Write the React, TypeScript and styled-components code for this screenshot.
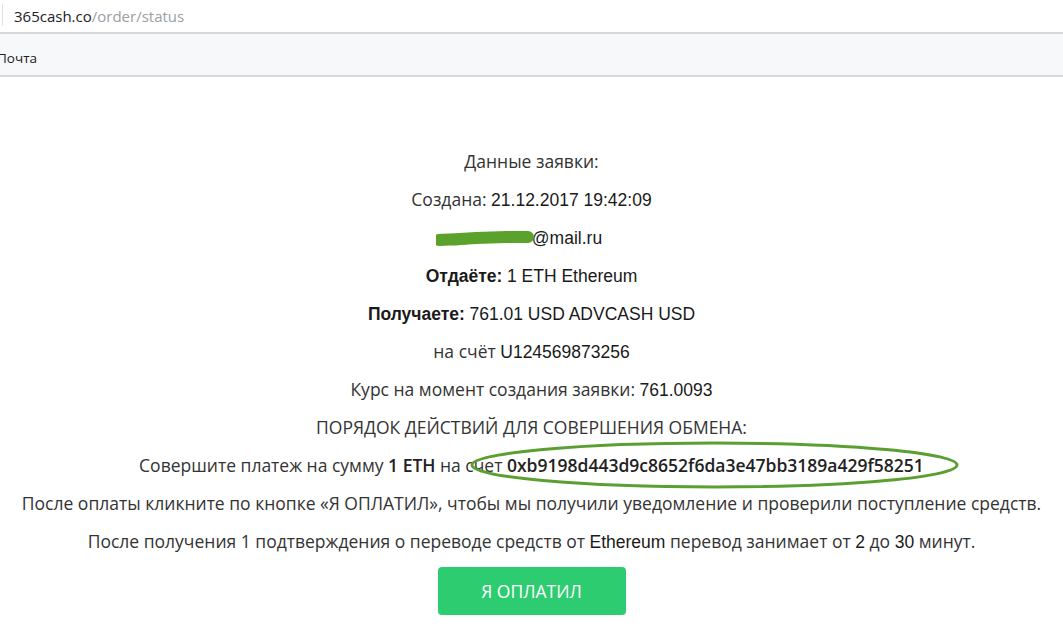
import React from 'react';
import styled, { createGlobalStyle } from 'styled-components';

const GlobalStyle = createGlobalStyle`
  html, body {
    margin: 0;
    padding: 0;
    background: #ffffff;
  }
  body {
    font-family: 'Open Sans', 'Liberation Sans', sans-serif;
    overflow: hidden;
  }
`;

const AddressBar = styled.div`
  height: 32px;
  display: flex;
  align-items: center;
  padding-left: 14px;
  position: relative;
  font-family: 'Open Sans', sans-serif;
  font-size: 15px;
  color: #202124;
  background: #fff;
  &:before {
    content: '';
    position: absolute;
    left: 2px;
    top: 4px;
    width: 1px;
    height: 22px;
    background: #e3e3e3;
  }
`;
const UrlPath = styled.span`
  color: #9aa0a6;
`;
const BookmarksBar = styled.div`
  height: 41px;
  border-top: 2px solid #d6d8da;
  border-bottom: 2px solid #d6d8da;
  background: #f7f8fa;
  display: flex;
  align-items: center;
  overflow: hidden;
`;
const Bookmark = styled.span`
  font-family: 'Open Sans', sans-serif;
  font-size: 13.5px;
  color: #222;
  margin-left: -3px;
  margin-top: 6px;
`;

const Content = styled.div`
  padding-top: 73px;
  display: flex;
  flex-direction: column;
  align-items: center;
`;
const Line = styled.p`
  margin: 0 0 16px;
  height: 22px;
  line-height: 22px;
  font-size: 17.5px;
  color: #333;
  white-space: nowrap;
  text-align: center;
`;
const Value = styled.span<{ $bold?: boolean }>`
  font-family: 'Liberation Sans', Arial, sans-serif;
  color: #1a1a1a;
  font-weight: ${(p) => (p.$bold ? 700 : 400)};
`;
const Strong = styled.span`
  font-weight: 600;
  color: #222;
`;
const Hidden = styled.span`
  position: relative;
  display: inline-block;
  width: 71px;
  height: 22px;
  vertical-align: top;
`;
const Scribble = styled.svg`
  position: absolute;
  left: -25px;
  top: 3px;
  width: 99px;
  height: 18px;
`;
const Circled = styled.span`
  position: relative;
  font-weight: 600;
  color: #222;
`;
const Ellipse = styled.svg`
  position: absolute;
  left: -40px;
  top: -12px;
  width: calc(100% + 78px);
  height: 48px;
  overflow: visible;
  pointer-events: none;
`;
const PaidButton = styled.button`
  width: 188px;
  height: 48px;
  margin-top: -1px;
  border: none;
  border-radius: 4px;
  background: #2ecc71;
  color: #ffffff;
  font-family: 'Open Sans', sans-serif;
  font-size: 17.5px;
  cursor: pointer;
`;

export default function App() {
  return (
    <>
      <GlobalStyle />
      <AddressBar>
        365cash.co<UrlPath>/order/status</UrlPath>
      </AddressBar>
      <BookmarksBar>
        <Bookmark>Почта</Bookmark>
      </BookmarksBar>
      <Content>
        <Line>Данные заявки:</Line>
        <Line>
          Создана: <Value>21.12.2017 19:42:09</Value>
        </Line>
        <Line>
          <Hidden>
            <Scribble viewBox="0 0 99 18">
              <path
                d="M3 11 C10 10 16 11 24 10 L40 9 L70 8 L92 8"
                stroke="#5ba22c"
                strokeWidth="12"
                strokeLinecap="round"
                fill="none"
              />
              <path d="M2 12 L30 13" stroke="#5ba22c" strokeWidth="5" strokeLinecap="round" fill="none" />
            </Scribble>
          </Hidden>
          <Value>@mail.ru</Value>
        </Line>
        <Line>
          <Value $bold>Отдаёте:</Value> <Value>1 ETH Ethereum</Value>
        </Line>
        <Line>
          <Value $bold>Получаете:</Value> <Value>761.01 USD ADVCASH USD</Value>
        </Line>
        <Line>
          на счёт <Value>U124569873256</Value>
        </Line>
        <Line>
          Курс на момент создания заявки: <Value>761.0093</Value>
        </Line>
        <Line>ПОРЯДОК ДЕЙСТВИЙ ДЛЯ СОВЕРШЕНИЯ ОБМЕНА:</Line>
        <Line>
          Совершите платеж на сумму <Strong>1 ETH</Strong> на счет{' '}
          <Circled>
            0xb9198d443d9c8652f6da3e47bb3189a429f58251
            <Ellipse viewBox="0 0 100 48" preserveAspectRatio="none">
              <ellipse
                cx="50"
                cy="24"
                rx="49"
                ry="22"
                fill="none"
                stroke="#5b9f30"
                strokeWidth="3"
                vectorEffect="non-scaling-stroke"
              />
            </Ellipse>
          </Circled>
        </Line>
        <Line>
          После оплаты кликните по кнопке «Я ОПЛАТИЛ», чтобы мы получили уведомление и проверили поступление средств.
        </Line>
        <Line>
          После получения 1 подтверждения о переводе средств от <Value>Ethereum</Value> перевод занимает от{' '}
          <Value>2</Value> до <Value>30</Value> минут.
        </Line>
        <PaidButton>Я ОПЛАТИЛ</PaidButton>
      </Content>
    </>
  );
}
